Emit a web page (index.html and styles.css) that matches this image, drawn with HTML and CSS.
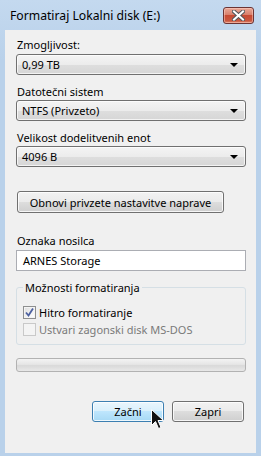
FILE: index.html
```html
<!DOCTYPE html>
<html lang="sl">
<head>
  <meta charset="UTF-8">
  <title>Formatiraj Lokalni disk (E:)</title>
  <link rel="stylesheet" href="styles.css">
</head>
<body>
  <div class="window">
    <div class="titlebar">
      <span class="title">Formatiraj Lokalni disk (E:)</span>
      <button class="close-btn" aria-label="Zapri">
        <svg width="13" height="11" viewBox="0 0 13 11">
          <path d="M2 1.5 L11 9.5 M11 1.5 L2 9.5" stroke="#53575c" stroke-width="4" stroke-linecap="square"/>
          <path d="M2 1.5 L11 9.5 M11 1.5 L2 9.5" stroke="#ffffff" stroke-width="2" stroke-linecap="square"/>
        </svg>
      </button>
    </div>

    <div class="client">
      <div class="label label-first">Zmogljivost:</div>
      <div class="combo"><span>0,99 TB</span><i class="arrow"></i></div>

      <div class="label">Datotečni sistem</div>
      <div class="combo"><span>NTFS (Privzeto)</span><i class="arrow"></i></div>

      <div class="label">Velikost dodelitvenih enot</div>
      <div class="combo"><span>4096 B</span><i class="arrow"></i></div>

      <button class="btn btn-restore">Obnovi privzete nastavitve naprave</button>

      <div class="label label-volume">Oznaka nosilca</div>
      <div class="textbox">ARNES Storage</div>

      <fieldset class="group">
        <legend>Možnosti formatiranja</legend>
        <label class="check">
          <span class="box checked">
            <svg width="9" height="9" viewBox="0 0 9 9">
              <path d="M1 4.5 L3.5 7.5 L8 0.5" fill="none" stroke="#4d61a0" stroke-width="1.8"/>
            </svg>
          </span>
          Hitro formatiranje
        </label>
        <label class="check disabled">
          <span class="box"></span>
          Ustvari zagonski disk MS-DOS
        </label>
      </fieldset>

      <div class="progress"></div>

      <div class="actions">
        <button class="btn btn-hover">Začni</button>
        <button class="btn">Zapri</button>
      </div>

      <svg class="cursor" width="13" height="21" viewBox="0 0 13 21">
        <path d="M0.5 0.5 L0.5 16.5 L4.5 12.5 L7.5 19.5 L10 18.5 L7 11.5 L12.5 11.5 Z" fill="#111111" stroke="#ffffff" stroke-width="1"/>
      </svg>
    </div>
  </div>
</body>
</html>
```

FILE: styles.css
```css
body {
  margin: 0;
  font-family: 'Noto Sans', 'Open Sans', sans-serif;
  font-size: 11px;
  color: #000;
}

.window {
  width: 261px;
  height: 456px;
  background: linear-gradient(180deg, #c4d9ef 0%, #b9d1ea 60px, #b9d1ea 100%);
  display: flex;
  flex-direction: column;
  box-sizing: border-box;
}

.titlebar {
  height: 30px;
  display: flex;
  justify-content: space-between;
  align-items: flex-start;
  padding: 0 7px 0 10px;
  flex-shrink: 0;
}

.title {
  margin-top: 8px;
  font-size: 12.2px;
  line-height: 16px;
  color: #000;
}

.close-btn {
  margin-top: 7px;
  width: 31px;
  height: 17px;
  padding: 0;
  border: 1px solid #6b3434;
  border-radius: 3px;
  background: linear-gradient(180deg, #e9a897 0%, #d8806c 45%, #c74a33 50%, #c9573f 85%, #df8a70 100%);
  box-shadow: inset 0 0 0 1px rgba(255, 210, 200, 0.5);
  display: flex;
  align-items: center;
  justify-content: center;
}

.client {
  position: relative;
  flex: 1;
  margin: 0 5px 3px 5px;
  background: #f0f0f0;
  padding: 0 10px 0 11px;
  display: flex;
  flex-direction: column;
}

.label {
  line-height: 15px;
  margin-top: 9px;
  margin-bottom: 1px;
  padding-left: 1px;
}

.label-first {
  margin-top: 7px;
  margin-bottom: 2px;
}

.combo {
  height: 21px;
  box-sizing: border-box;
  border: 1px solid #707070;
  border-radius: 3px;
  background: linear-gradient(180deg, #f4f4f4 0%, #ececec 50%, #dedede 52%, #d6d6d6 100%);
  box-shadow: inset 0 0 0 1px rgba(255, 255, 255, 0.7);
  display: flex;
  align-items: center;
  justify-content: space-between;
  padding: 0 7px 0 5px;
}

.arrow {
  width: 0;
  height: 0;
  border-left: 4px solid transparent;
  border-right: 4px solid transparent;
  border-top: 4px solid #000;
}

.btn {
  font-family: inherit;
  font-size: 11px;
  color: #000;
  height: 22px;
  box-sizing: border-box;
  border: 1px solid #707070;
  border-radius: 3px;
  background: linear-gradient(180deg, #f2f2f2 0%, #ebebeb 48%, #dddddd 50%, #cfcfcf 100%);
  box-shadow: inset 0 0 0 1px rgba(255, 255, 255, 0.8);
  padding: 0;
}

.btn-restore {
  margin-top: 24px;
  margin-left: 1px;
  width: 207px;
}

.label-volume {
  margin-top: 20px;
  margin-bottom: 2px;
}

.textbox {
  height: 21px;
  box-sizing: border-box;
  border: 1px solid #abadb3;
  background: #fff;
  padding: 0 6px;
  line-height: 19px;
}

.group {
  margin: 10px 0 0 0;
  padding: 10px 6px 0 6px;
  border: 1px solid #d5dfe5;
  border-radius: 3px;
  height: 64px;
  box-sizing: border-box;
}

.group legend {
  padding: 0 2px;
  margin-left: 0;
  line-height: 13px;
}

.check {
  display: flex;
  align-items: center;
  gap: 3px;
  height: 16px;
  margin-bottom: 1px;
}

.check.disabled {
  color: #7a7a7a;
}

.box {
  width: 13px;
  height: 13px;
  box-sizing: border-box;
  border: 1px solid #8e8f8f;
  background: linear-gradient(135deg, #dcdcdc 0%, #f4f4f4 60%, #ffffff 100%);
  box-shadow: inset 0 0 0 1px #f4f4f4;
  display: flex;
  align-items: center;
  justify-content: center;
}

.check.disabled .box {
  border-color: #c9c9c9;
  background: #f4f4f4;
  box-shadow: none;
}

.progress {
  margin-top: 13px;
  height: 14px;
  box-sizing: border-box;
  border: 1px solid #b2b2b2;
  border-radius: 3px;
  background: linear-gradient(180deg, #f3f3f3 0%, #e6e6e6 45%, #d9d9d9 55%, #e8e8e8 100%);
}

.actions {
  display: flex;
  justify-content: flex-end;
  gap: 8px;
  margin-top: 29px;
  padding-right: 2px;
}

.actions .btn {
  width: 72px;
  height: 21px;
}

.btn-hover {
  border-color: #3c7fb1;
  background: linear-gradient(180deg, #eaf6fd 0%, #d9f0fc 48%, #bee6fd 50%, #a7d9f5 100%);
}

.cursor {
  position: absolute;
  left: 146px;
  top: 379px;
}
```
